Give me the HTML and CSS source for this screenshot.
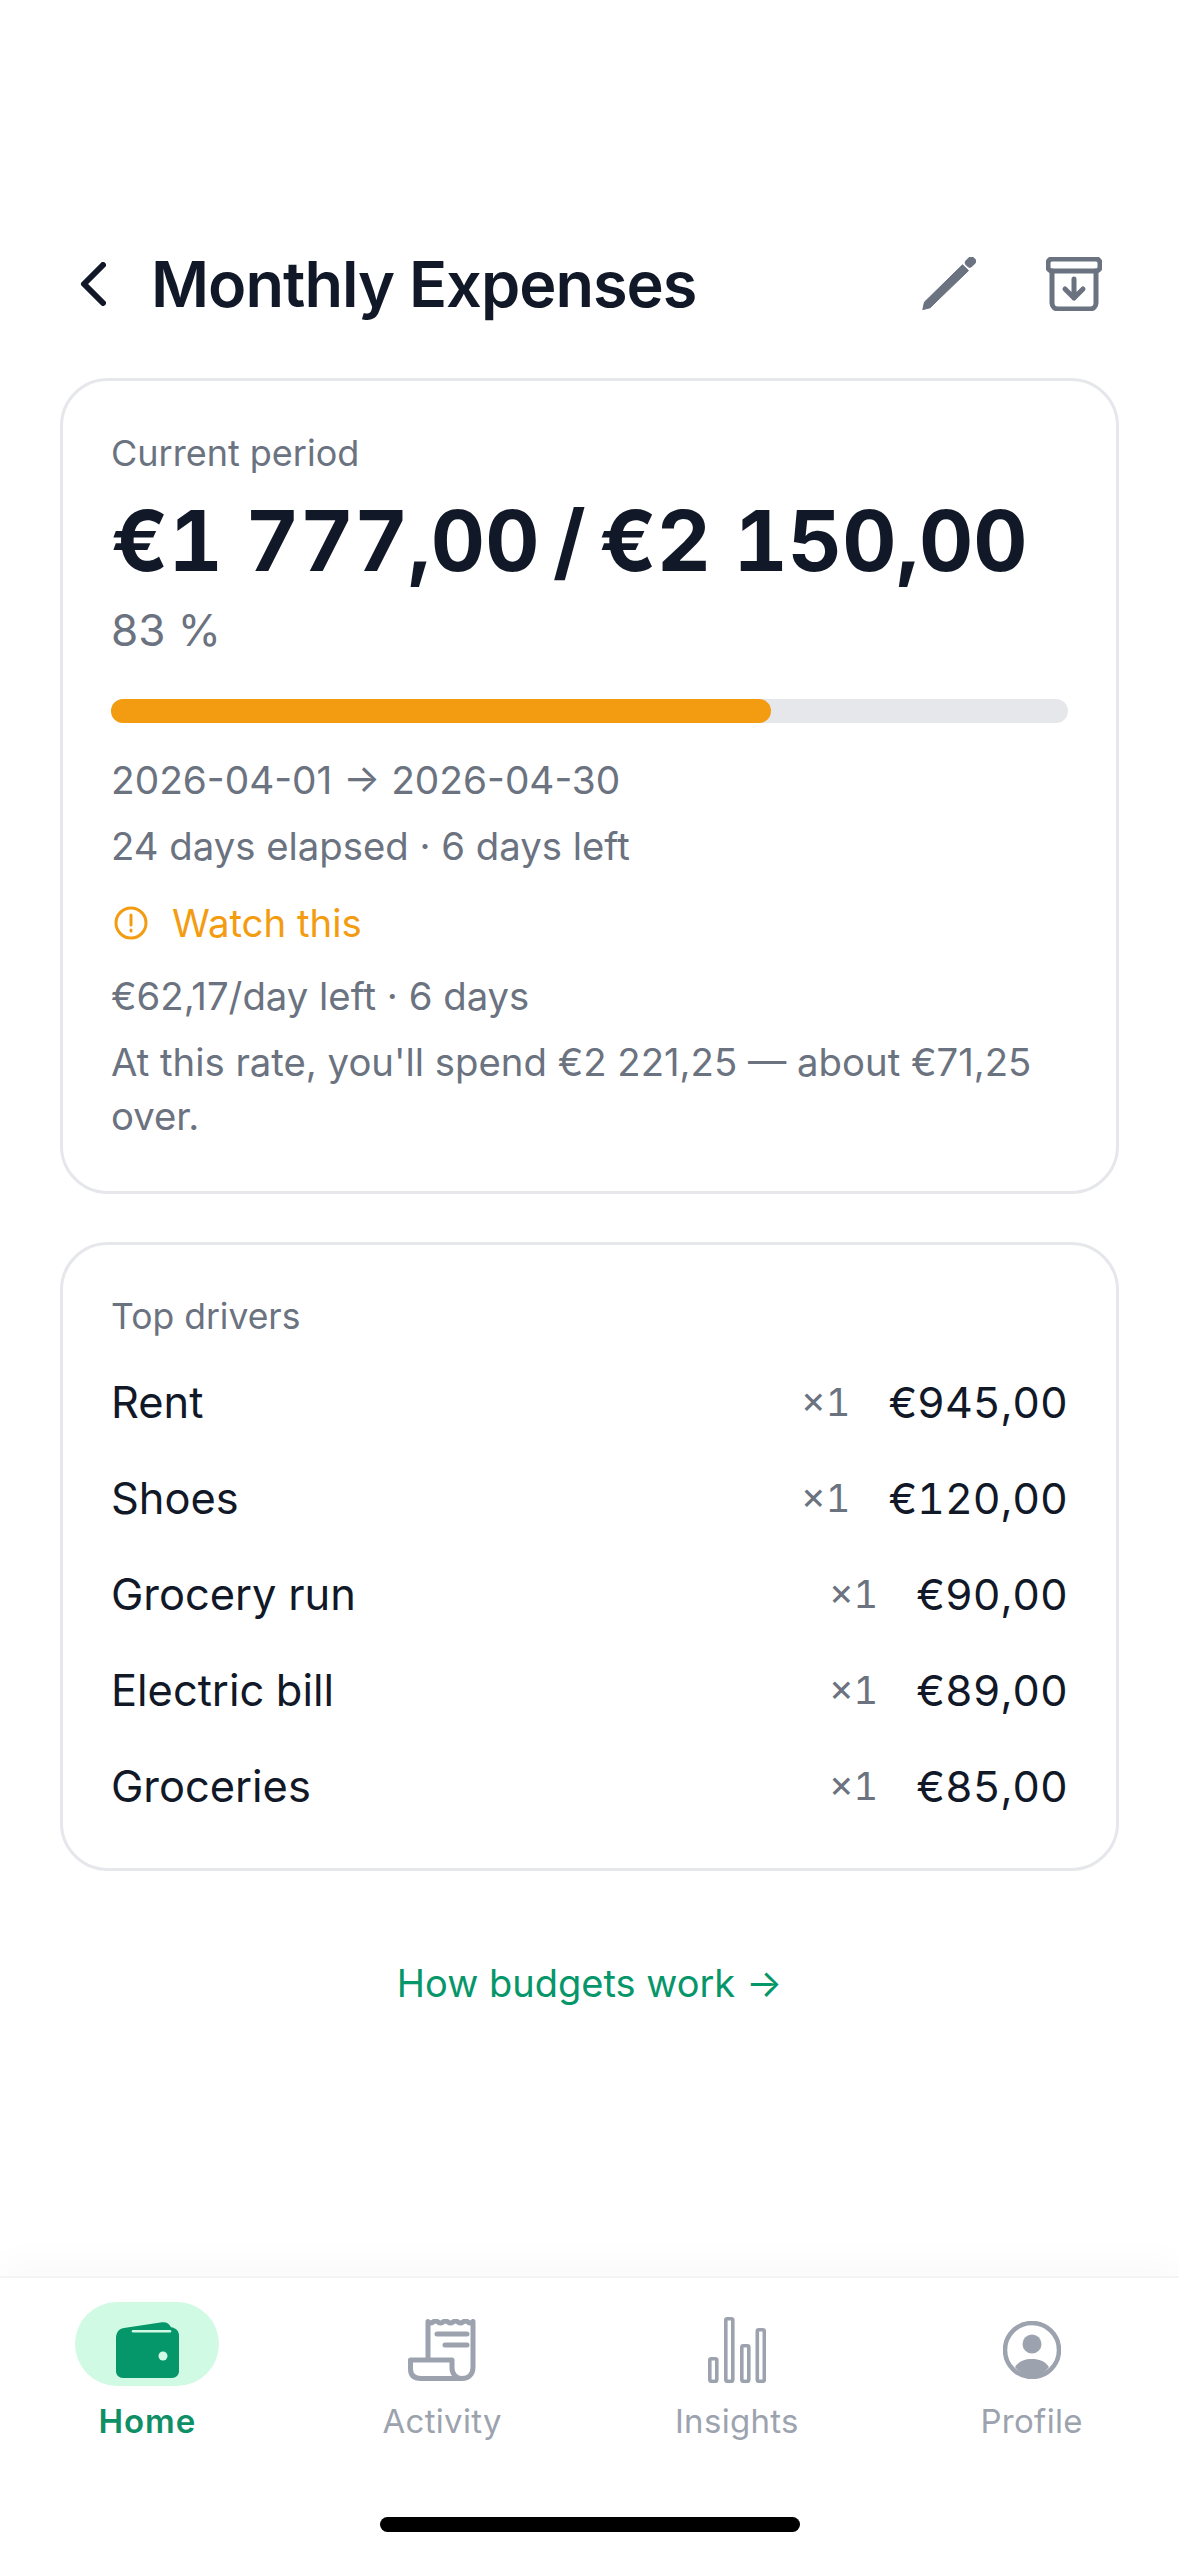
FILE: index.html
```html
<!DOCTYPE html>
<html lang="en">
<head>
  <meta charset="UTF-8" />
  <meta name="viewport" content="width=device-width, initial-scale=1.0"/>
  <title>Monthly Expenses</title>
  <link rel="stylesheet" href="styles.css">
</head>
<body>
  <div class="page">
    <div class="header">
      <svg class="back-icon" viewBox="0 0 26 44"><path d="M23 3 4 22l19 19"/></svg>
      <span class="title">Monthly Expenses</span>
      <svg class="edit-icon" viewBox="0 0 54 54">
        <path d="M.8 52.600 2.500 45 40.500 7.800l6 5.800L8 50.800z"/>
        <rect x="43.500" y="1" width="10" height="8" rx="3" transform="rotate(-45 48.500 5)"/>
      </svg>
      <svg class="archive-icon" viewBox="0 0 56 54">
        <rect x="2" y="2" width="52" height="12" rx="4"/>
        <path d="M6 14v32a6 6 0 0 0 6 6h32a6 6 0 0 0 6-6V14"/>
        <path d="M28 22v19M19 32l9 9 9-9"/>
      </svg>
    </div>

    <div class="card">
      <div class="card-label">Current period</div>
      <div class="amount"><span class="amount-value">€1 777,00</span> / <span class="amount-value">€2 150,00</span></div>
      <div class="percent">83 %</div>
      <div class="bar"><div class="bar-fill" style="width: 69%"></div></div>
      <div class="muted dates">2026-04-01 → 2026-04-30</div>
      <div class="muted elapsed">24 days elapsed · 6 days left</div>
      <div class="status">
        <svg class="status-icon" viewBox="0 0 34 34">
          <circle cx="17" cy="17" r="15"/>
          <path d="M17 9v10M17 24v1"/>
        </svg>
        <span>Watch this</span>
      </div>
      <div class="muted per-day">€62,17/day left · 6 days</div>
      <div class="muted forecast">At this rate, you'll spend €2 221,25 — about €71,25 over.</div>
    </div>

    <div class="card drivers">
      <div class="card-label">Top drivers</div>
      <div class="driver-row"><span class="driver-name">Rent</span><span class="driver-count">×1</span><span class="driver-price">€945,00</span></div>
      <div class="driver-row"><span class="driver-name">Shoes</span><span class="driver-count">×1</span><span class="driver-price">€120,00</span></div>
      <div class="driver-row"><span class="driver-name">Grocery run</span><span class="driver-count">×1</span><span class="driver-price">€90,00</span></div>
      <div class="driver-row"><span class="driver-name">Electric bill</span><span class="driver-count">×1</span><span class="driver-price">€89,00</span></div>
      <div class="driver-row"><span class="driver-name">Groceries</span><span class="driver-count">×1</span><span class="driver-price">€85,00</span></div>
    </div>

    <div class="help-link">How budgets work →</div>

    <div class="tabbar">
      <div class="tab tab-active">
        <div class="tab-pill">
          <svg class="tab-icon" viewBox="0 0 63 56">
            <path class="wallet-body" d="M0 17c0-6 2-10 8-11L46 .3c4-.6 7 1 9 5 5 .5 8 4 8 8V49c0 4-3 7-7 7H7c-4 0-7-3-7-7z"/>
            <path class="wallet-line" d="M17 9.300h37"/>
            <circle class="wallet-dot" cx="47" cy="34" r="4.500"/>
          </svg>
        </div>
        <span>Home</span>
      </div>
      <div class="tab">
        <div class="tab-pill">
          <svg class="tab-icon line" viewBox="0 0 68 62">
            <path d="M20 40V2.500q2.500 2.500 5 .5t5 0 5 0 5 0 5 0 5 0 5 0 5 0 5-.5V48c0 7-4 11.500-11 11.500H13C6 59.500 2.500 56 2.500 50v-9H44v8c0 6 4 10.500 10 10.500"/>
            <path d="M29 15h30M37 26h22"/>
          </svg>
        </div>
        <span>Activity</span>
      </div>
      <div class="tab">
        <div class="tab-pill">
          <svg class="tab-icon line thin" viewBox="0 0 58 66">
            <rect x="1.800" y="41.800" width="7" height="22.500" rx="1.500"/>
            <rect x="17.800" y="1.800" width="7" height="62.500" rx="1.500"/>
            <rect x="33.800" y="28.800" width="7" height="35.500" rx="1.500"/>
            <rect x="49.300" y="12.800" width="7" height="51.500" rx="1.500"/>
          </svg>
        </div>
        <span>Insights</span>
      </div>
      <div class="tab">
        <div class="tab-pill">
          <svg class="tab-icon line round" viewBox="0 0 58 58">
            <circle cx="29" cy="29" r="27"/>
            <circle class="solid" cx="29" cy="23" r="9.500"/>
            <path class="solid" d="M12 46c4-6 10-8 17-8s13 2 17 8c-4 5-10 10-17 10s-13-5-17-10z"/>
          </svg>
        </div>
        <span>Profile</span>
      </div>
    </div>
    <div class="home-area"><div class="home-indicator"></div></div>
  </div>
</body>
</html>
```

FILE: styles.css
```css
body {
  font-family: Inter, "Liberation Sans", sans-serif;
  background-color: #ffffff;
  margin: 0;
}

.page {
  display: flex;
  flex-direction: column;
  height: 2556px;
  overflow: hidden;
}

.header {
  display: flex;
  align-items: center;
  height: 100px;
  margin-top: 234px;
  padding: 0 77px 0 80px;
}

.back-icon {
  width: 26px;
  height: 44px;
  margin-right: 45px;
}

.back-icon path {
  fill: none;
  stroke: #111827;
  stroke-width: 6;
  stroke-linecap: round;
  stroke-linejoin: round;
}

.title {
  flex-grow: 1;
  font-size: 63px;
  font-weight: 600;
  letter-spacing: -1px;
  color: #111827;
}

.edit-icon {
  width: 54px;
  height: 54px;
  margin-right: 70px;
  fill: #6b7280;
  stroke: #6b7280;
  stroke-width: 1;
  stroke-linejoin: round;
}

.archive-icon {
  width: 56px;
  height: 54px;
  fill: none;
  stroke: #6b7280;
  stroke-width: 5;
  stroke-linecap: round;
  stroke-linejoin: round;
}

.card {
  margin: 44px 60px 0;
  padding: 48px;
  background: white;
  border: 3px solid #e5e7eb;
  border-radius: 48px;
}

.card-label {
  font-size: 36px;
  line-height: 48px;
  color: #6b7280;
}

.amount {
  margin-top: 14px;
  font-size: 84px;
  line-height: 100px;
  font-weight: 700;
  font-variant-numeric: tabular-nums;
  word-spacing: -9px;
  color: #111827;
  white-space: nowrap;
}

.amount-value {
  word-spacing: 0;
}

.percent {
  margin-top: 13px;
  font-size: 44px;
  line-height: 52px;
  color: #6b7280;
}

.bar {
  height: 24px;
  margin-top: 43px;
  background-color: #e5e7eb;
  border-radius: 12px;
}

.bar-fill {
  height: 100%;
  background-color: #f39c12;
  border-radius: 12px;
}

.muted {
  font-size: 38.300px;
  line-height: 54px;
  color: #6b7280;
}

.dates {
  margin-top: 30px;
  font-size: 38.800px;
}

.elapsed {
  margin-top: 12px;
}

.status {
  display: flex;
  align-items: center;
  gap: 24px;
  margin-top: 23px;
  font-size: 38.400px;
  line-height: 54px;
  color: #f39c12;
}

.status-icon {
  width: 34px;
  height: 34px;
  margin-left: 3px;
  fill: none;
  stroke: #f39c12;
  stroke-width: 3;
  stroke-linecap: round;
}

.per-day {
  margin-top: 19px;
}

.forecast {
  margin-top: 12px;
}

.drivers {
  margin-top: 48px;
  padding-bottom: 34px;
}

.drivers .card-label {
  margin-bottom: 13px;
  font-size: 35.500px;
}

.driver-row {
  display: flex;
  align-items: center;
  height: 96px;
  font-size: 43px;
  font-variant-numeric: tabular-nums;
  color: #111827;
}

.driver-name {
  flex-grow: 1;
  font-size: 43.400px;
}

.driver-count {
  margin-right: 38px;
  font-size: 38px;
  color: #6b7280;
}

.help-link {
  margin-top: 85px;
  font-size: 38px;
  line-height: 54px;
  text-align: center;
  color: #059669;
}

.tabbar {
  display: grid;
  grid-template-columns: repeat(4, 1fr);
  margin-top: auto;
  padding-top: 24px;
  background: white;
  border-top: 2px solid #f3f4f6;
  box-shadow: 0 -16px 32px rgba(0, 0, 0, 0.025);
}

.tab {
  display: flex;
  flex-direction: column;
  align-items: center;
  font-size: 33px;
  letter-spacing: 0.300px;
  color: #9ca3af;
}

.tab-active {
  font-weight: 600;
  letter-spacing: 1px;
  color: #0f8f66;
}

.tab-pill {
  display: flex;
  align-items: center;
  justify-content: center;
  box-sizing: border-box;
  width: 144px;
  height: 84px;
  margin-bottom: 15px;
  padding-top: 12px;
  border-radius: 42px;
}

.tab-active .tab-pill {
  background-color: #d1fae5;
}

.tab-active .tab-icon {
  width: 63px;
  height: 56px;
}

.wallet-body {
  fill: #059669;
}

.wallet-line {
  fill: none;
  stroke: #d1fae5;
  stroke-width: 2.500;
  stroke-linecap: round;
}

.wallet-dot {
  fill: #d1fae5;
}

.tab-icon.line {
  width: 68px;
  height: 62px;
  fill: none;
  stroke: #9ca3af;
  stroke-width: 5;
  stroke-linecap: round;
  stroke-linejoin: round;
}

.tab-icon.thin {
  width: 58px;
  height: 66px;
  stroke-width: 3.600;
}

.tab-icon.round {
  width: 58px;
  height: 58px;
  stroke-width: 4.500;
}

.tab-icon .solid {
  fill: #9ca3af;
  stroke: none;
}

.home-area {
  display: flex;
  justify-content: center;
  height: 39px;
  margin-top: 76px;
}

.home-indicator {
  width: 420px;
  height: 15px;
  background-color: #000000;
  border-radius: 8px;
}
```
